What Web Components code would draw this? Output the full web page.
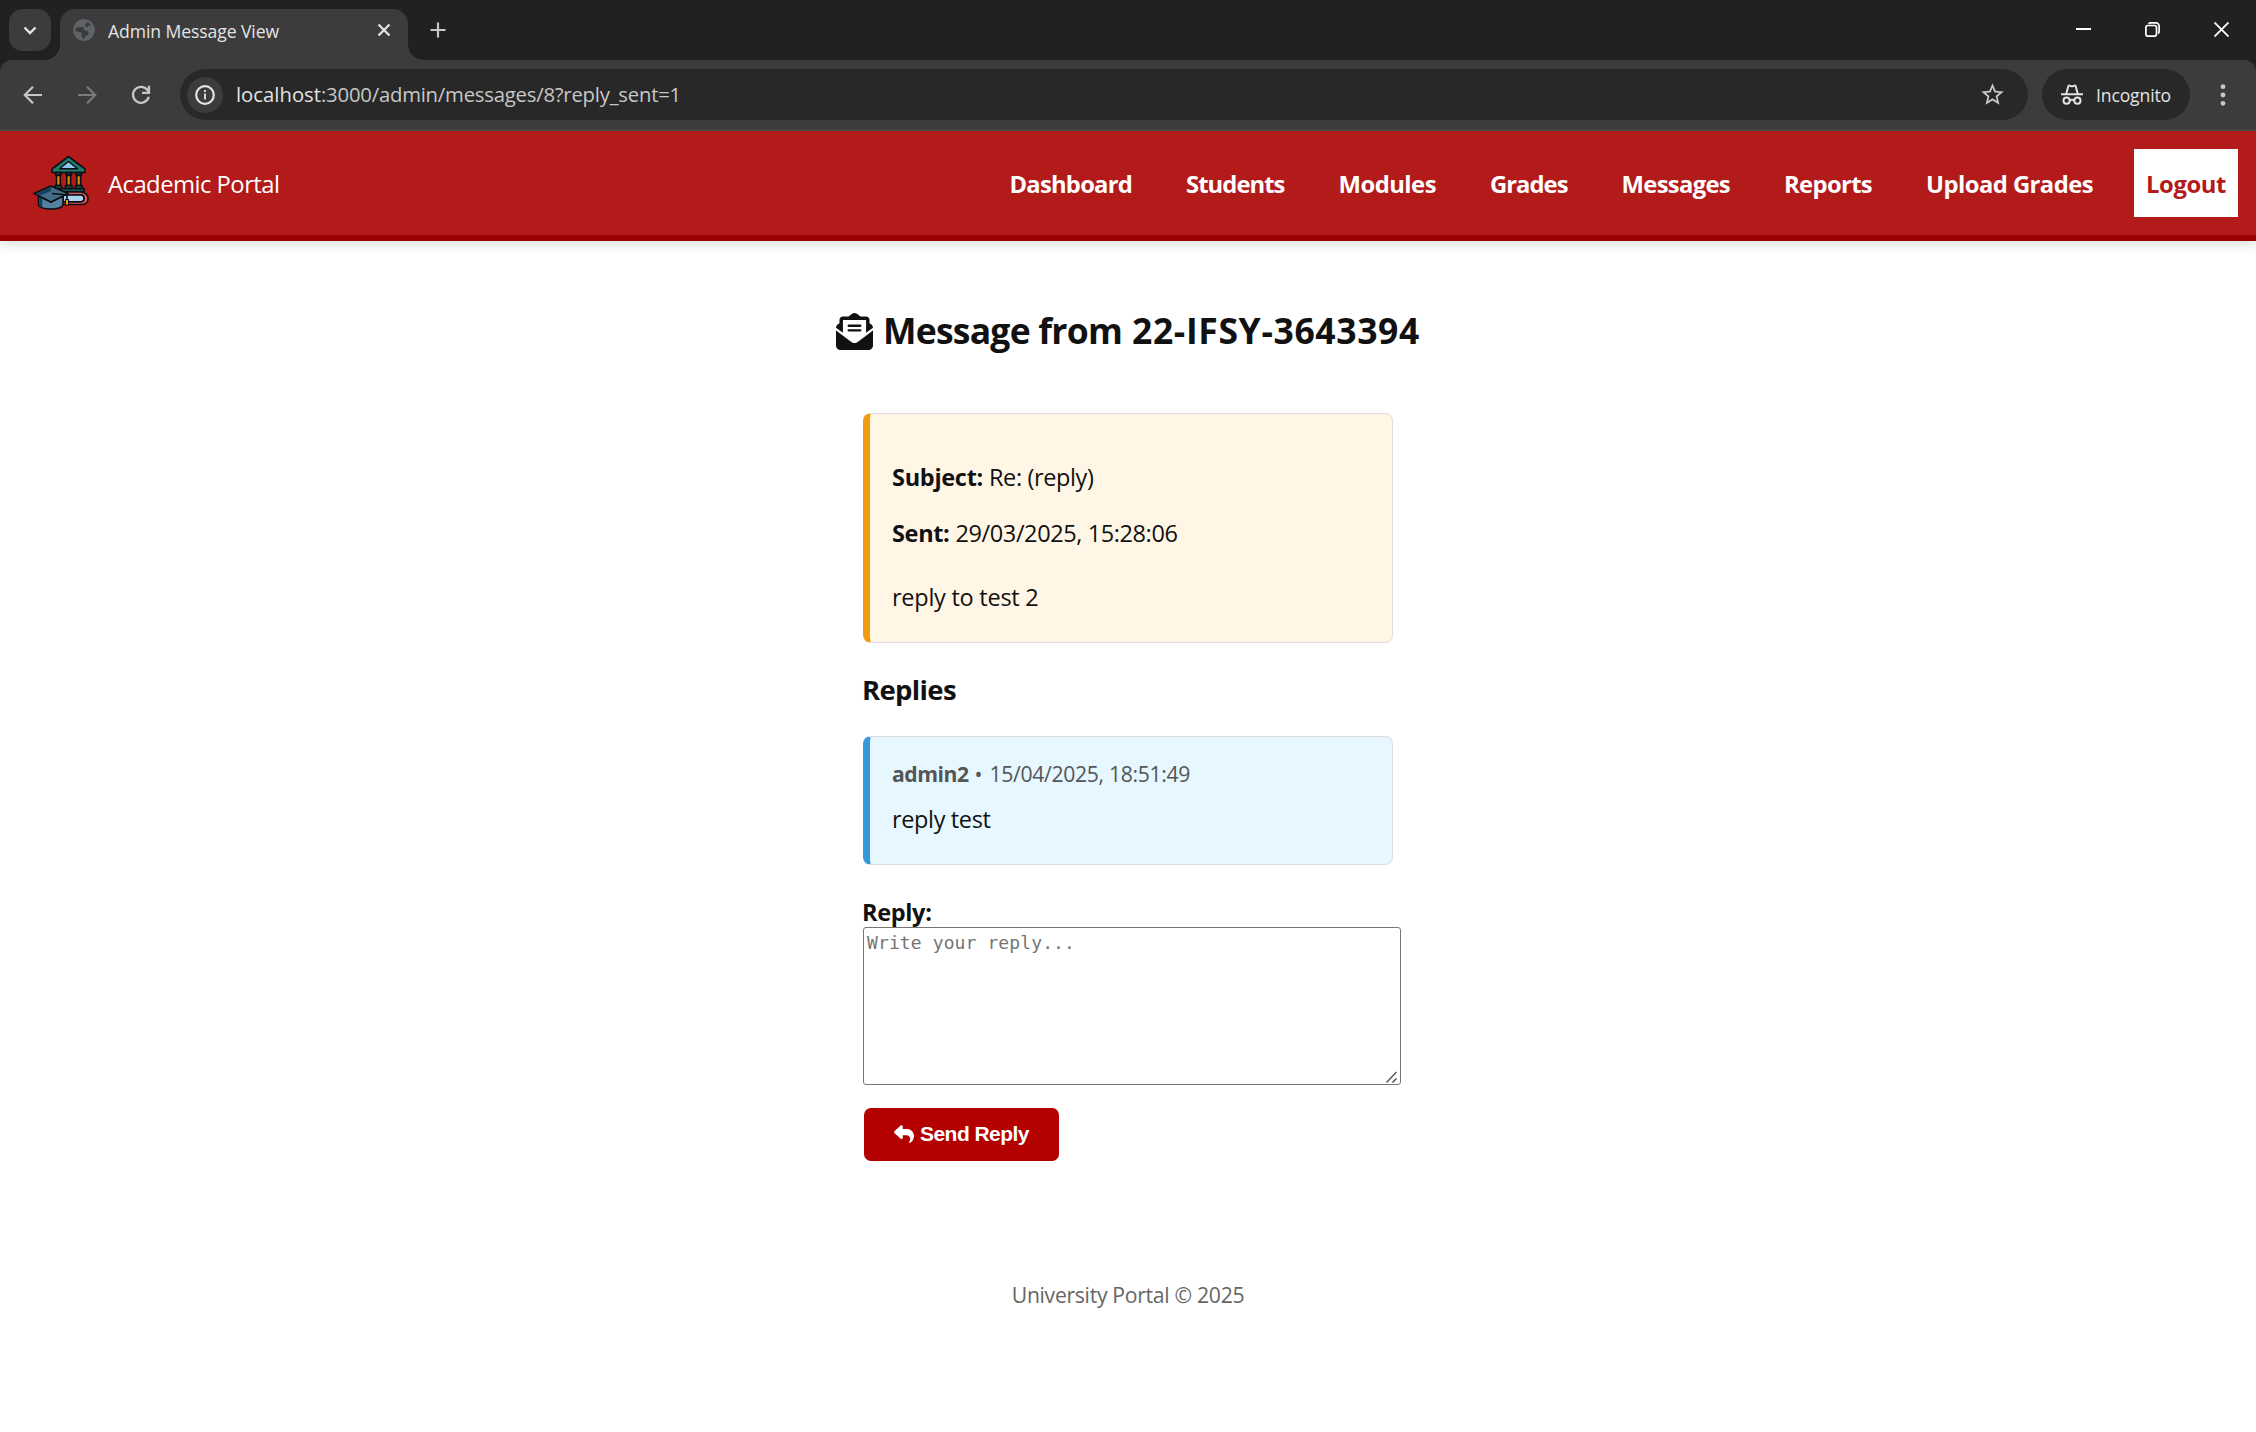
<!DOCTYPE html>
<html lang="en">
<head>
<meta charset="utf-8">
<title>Admin Message View</title>
<style>
html,body{margin:0;height:100%}
body{background:#fff;color:#111;font-family:"Open Sans","Noto Sans",sans-serif;overflow:hidden;display:flex;flex-direction:column}
</style>
</head>
<body>
<browser-chrome></browser-chrome>
<portal-header></portal-header>
<message-page></message-page>
<script>
function define(name, html, setup) {
  customElements.define(name, class extends HTMLElement {
    connectedCallback() {
      if (this.shadowRoot) return;
      this.attachShadow({ mode: "open" }).innerHTML = html;
      if (setup) setup(this, this.shadowRoot);
    }
  });
}

define("browser-chrome", `
<style>
:host{display:block;background:#202221;height:131px;color:#e3e3e3;flex:none}
svg{display:block;flex:none}
.strip{height:60px;display:flex;align-items:stretch;box-sizing:border-box}
.menu{width:42px;height:42px;border-radius:14px;background:#3c3c3c;margin:9px 9px 0 9px;display:grid;place-items:center}
.tab{position:relative;width:348px;margin-top:9px;box-sizing:border-box;border-radius:15px 15px 0 0;background:#3c3c3c;display:flex;align-items:center;padding:0 13px 9px 13px}
.tab fit-text{margin:2px auto 0 13px}
.tab::before,.tab::after{content:"";position:absolute;bottom:0;width:15px;height:15px}
.tab::before{left:-15px;background:radial-gradient(circle at 0 0,transparent 14.5px,#3c3c3c 15px)}
.tab::after{right:-15px;background:radial-gradient(circle at 100% 0,transparent 14.5px,#3c3c3c 15px)}
.plus{margin:22px auto 0 22px}
.win{display:flex;gap:54px;padding:22px 27px 0 0}
.bar{height:69px;background:#3c3c3c;border-radius:12px 12px 0 0;display:flex;align-items:center;padding:0 22px 0 22px;box-sizing:border-box;border-top:0}
.nav{display:flex;gap:32px;width:158px}
.url{width:1848px;height:51px;border-radius:26px;background:#282828;display:flex;align-items:center;box-sizing:border-box;padding:0 22px 0 7px}
.info{width:36px;height:36px;border-radius:50%;background:#3c3c3c;display:grid;place-items:center;margin-right:13px}
.u,.path{padding-bottom:2px}
.path{margin-right:auto;color:#c7c7c7}
.inc{width:148px;height:51px;border-radius:26px;background:#282828;margin-left:14px;display:flex;align-items:center;box-sizing:border-box;padding-left:19px;gap:13px}
.dots{margin-left:30px}
.line{height:2px;background:#4a4a4a}
.u{display:flex}
</style>
<div class="strip">
 <div class="menu"><svg width="14" height="9" fill="none" stroke="#e3e3e3" stroke-width="2.4"><path d="M1.5 1.5 7 7l5.500-5.500"/></svg></div>
 <div class="tab">
  <svg width="22" height="22" viewBox="0 0 22 22"><circle cx="11" cy="11" r="9.600" fill="none" stroke="#5f6368" stroke-width="2.400"/><path fill="#5f6368" d="M2 8.500 9 8c3 0 1 3.500 4 3.800 2.500.2 3 1.200 2.600 3-.5 2.200-3 1.500-3.600 3L11.500 21 19 17l2-7-1.500-4-3 .8c-1.200 2-4.500 1.200-4.500-.8 0-1.500 2-1.200 2-3L12 1 5 3.500zM2 12l6 1.500c2 .8-.5 2.500 1 4L10 20.500 4 17z"/></svg>
  <fit-text w="171" fs="17.600" lh="28">Admin Message View</fit-text>
  <svg width="22" height="14" viewBox="0 0 22 14" fill="none" stroke="#e3e3e3" stroke-width="2.300"><path d="m5.500 1.500 11 11m0-11-11 11"/></svg>
 </div>
 <svg class="plus" width="16" height="16" stroke="#c7c7c7" stroke-width="2.200"><path d="M8 .5v15M.5 8h15"/></svg>
 <div class="win">
  <svg width="15" height="15" stroke="#fff" stroke-width="2"><path d="M0 7h15"/></svg>
  <svg width="15" height="15" fill="none" stroke="#fff" stroke-width="1.700"><rect x=".9" y="3.500" width="10.600" height="10.600" rx="2"/><path d="M3.500 1.800Q4.300.9 5.500.9H11a3.100 3.100 0 0 1 3.100 3.100v5.500q0 1.200-.9 2"/></svg>
  <svg width="15" height="15" stroke="#fff" stroke-width="1.800"><path d="m.5.5 14 14m0-14-14 14"/></svg>
 </div>
</div>
<div class="bar">
 <div class="nav">
  <svg width="22" height="22" viewBox="0 0 22 22" fill="none" stroke="#c7c7c7" stroke-width="2.200"><path d="M20 11H3.500M11 2.800 2.800 11l8.200 8.200"/></svg>
  <svg width="22" height="22" viewBox="0 0 22 22" fill="none" stroke="#7b7b7b" stroke-width="2.200"><path d="M2 11h16.500M11 2.800l8.200 8.200-8.200 8.200"/></svg>
  <svg width="22" height="22" viewBox="0 0 22 22" fill="none" stroke="#c7c7c7" stroke-width="2.300"><path d="M18.800 12.800A8 8 0 1 1 17.800 6.500L19 8M19 1.800v7.100h-7"/></svg>
 </div>
 <div class="url">
  <div class="info"><svg width="20" height="20" fill="none" stroke="#e3e3e3"><circle cx="10" cy="10" r="8.800" stroke-width="2.200"/><path stroke-width="1.800" d="M10 8.500v6M10 5v2"/></svg></div>
  <span class="u"><fit-text w="85" fs="20.300" lh="28">localhost</fit-text></span>
  <span class="path"><fit-text w="360" fs="20.300" lh="28">:3000/admin/messages/8?reply_sent=1</fit-text></span>
  <svg width="27" height="27" viewBox="0 0 24 24" fill="#c7c7c7"><path d="M22 9.240l-7.190-.62L12 2 9.190 8.630 2 9.240l5.460 4.730L5.820 21 12 17.270 18.180 21l-1.630-7.030L22 9.240zM12 15.400l-3.760 2.270 1-4.280-3.320-2.880 4.380-.38L12 6.100l1.710 4.040 4.380.38-3.320 2.880 1 4.280L12 15.400z"/></svg>
 </div>
 <div class="inc">
  <svg width="22" height="22" viewBox="0 0 22 22" fill="none" stroke="#e3e3e3" stroke-width="2"><path d="M0 10.200h22M5.200 10 7.300 2.300Q7.500 1.300 8.600 1.600L11 2.400l2.400-.8q1.100-.3 1.300.7L16.800 10"/><circle cx="5.600" cy="16.700" r="3.100"/><circle cx="16.400" cy="16.700" r="3.100"/><path d="M8.500 16.500q2.500-1.400 5 0"/></svg>
  <fit-text w="75" fs="17.600" lh="28">Incognito</fit-text>
 </div>
 <svg class="dots" width="6" height="22" fill="#c7c7c7"><circle cx="3" cy="2.700" r="2.400"/><circle cx="3" cy="11" r="2.400"/><circle cx="3" cy="19.300" r="2.400"/></svg>
</div>
<div class="line"></div>`);

define("portal-logo", `
<style>:host{display:block;width:56px;height:56px}svg{display:block}</style>
<svg width="56" height="56" viewBox="0 0 56 56" stroke="#0b0f14" stroke-width="1.600" stroke-linejoin="round">
<path fill="#21796f" d="M35.500 1.500 52 14v3.500H19V14z"/><path fill="#8fc7ea" stroke-width="1.400" d="m35.500 6.500 9 7.200h-18z"/>
<path fill="#17524f" d="M22.500 17.500h5.500v2.500h-5.500zM33 17.500h5.500v2.500H33zM43 17.500h5.500v2.500H43zM21 33.500h30v3.500H21z"/>
<path fill="#e08a0b" d="M23.500 20.500h3.800v10h-3.800zM33.800 20.500h3.800v10h-3.800zM43.800 20.500h3.800v10h-3.800z"/>
<path fill="#17524f" d="M22 30.500h6.500v3H22zM32.500 30.500h6.500v3h-6.500zM42.500 30.500H49v3h-6.500z"/>
<path fill="#e25a60" d="M29 37h19q7 1 7 6.500T49 49.500H29v-2.800h18.500q3.500 0 3.500-3.300t-3.500-3.400H29z"/>
<path fill="#a9d3ee" d="M30 40h17.500q3.500 0 3.500 3.400t-3.500 3.300H30z"/>
<path fill="#56809f" d="M5.500 41v9q2 4 12.500 4t12-4v-9l-12 6z"/><path fill="#456d8a" d="m18 31 17 7.500L18 47 1 38.500z"/>
<path fill="#173f61" stroke="none" d="M3 38.500 18 32v4L7 40.500zM6.300 42l3 1.500v9l-3-2z"/>
<path fill="none" d="m19 38.500 15 1.500v5"/><path fill="#f0ab10" stroke-width="1.100" d="M32.500 44.500h3v5.500h-3z"/>
</svg>`);

define("nav-link", `
<style>:host{display:flex;align-items:center;padding-top:2px}:host([boxed]){background:#fff;color:#b31b1b;box-sizing:border-box;height:68px;padding:2px 12px 0;margin-left:-13px}</style><slot></slot>`);

define("portal-header", `
<style>
:host{display:flex;align-items:center;height:104px;flex:none;box-sizing:content-box;background:#b31b1b;border-bottom:6px solid #900;box-shadow:0 3px 12px rgba(0,0,0,.15);color:#fff;padding:0 18px 0 33px;position:relative}
portal-logo{margin-top:0;margin-right:19px}
.brand{margin-right:auto;padding-top:2px}
nav{display:flex;align-items:center;gap:54px;font-weight:700}
</style>
<portal-logo></portal-logo>
<fit-text class="brand" w="171.500" fs="23.800" lh="36">Academic Portal</fit-text>
<nav></nav>`, (el, root) => {
  const nav = root.querySelector("nav");
  const items = [["Dashboard",122.5],["Students",98.5],["Modules",97.5],["Grades",77.5],["Messages",108.5],["Reports",88],["Upload Grades",167],["Logout",80]];
  nav.innerHTML = items.map(([t, w]) => `<nav-link ${t === "Logout" ? "boxed" : ""}><fit-text w="${w}" fs="23.8" lh="36">${t}</fit-text></nav-link>`).join("");
});

define("message-card", `
<style>
:host{display:block;box-sizing:border-box;width:530px;border:1px solid #ddd;border-left:7px solid var(--accent);border-radius:8px;background:var(--fill);padding:0 22px}
</style><slot></slot>`);

define("send-button", `
<style>
:host{display:flex;width:195px;height:53px;border-radius:7px;background:#b30000;color:#fff;align-items:center;box-sizing:border-box;padding:0 0 2px 30px;gap:6px;font-family:"Liberation Sans",Arial,sans-serif;font-weight:700}
svg{display:block}
</style>
<svg width="20" height="20" viewBox="0 0 512 512" fill="#fff"><path d="M205 34.800c11.500 5.100 19 16.600 19 29.200v64H336c97.200 0 176 78.800 176 176c0 113.300-81.500 163.900-100.200 174.100c-2.500 1.400-5.300 1.900-8.100 1.900c-10.900 0-19.700-8.900-19.700-19.700c0-7.500 4.300-14.400 9.800-19.500c9.400-8.800 22.200-26.400 22.200-56.700c0-53-43-96-96-96H224v64c0 12.600-7.400 24.100-19 29.200s-25 3-34.400-5.400l-160-144C3.900 225.700 0 217.100 0 208s3.900-17.700 10.600-23.800l160-144c9.400-8.500 22.900-10.600 34.400-5.400z"/></svg>
<fit-text w="109" fs="21" lh="28">Send Reply</fit-text>`);

define("message-page", `
<style>
:host{display:flex;flex-direction:column;align-items:center;flex:1}
h1,h3,p,div{margin:0}
.title{display:flex;align-items:center;gap:10px;margin-top:63px;height:54px;font-weight:700}
.title svg{display:block}
.title fit-text{margin-top:-2px}
.col{width:530px;margin-top:55px;display:flex;flex-direction:column}
.row{display:flex;gap:6px;height:36px}
.first{--accent:#f39c12;--fill:#fff6e5;height:230px}
.second{--accent:#3498db;--fill:#e6f7ff;height:129px}
.b{font-weight:700}
.area{width:538px;height:158px;box-sizing:border-box;border:1px solid #767676;border-radius:3px;padding:2px 3px;color:#757575;font-family:"DejaVu Sans Mono","Liberation Mono",monospace;display:flex;justify-content:space-between}
.area svg{align-self:flex-end;margin:0 -1px -1px 0}
.meta{color:#555;gap:0}
footer{color:#666;margin-top:118px}
</style>
<h1 class="title">
<svg width="37" height="37" viewBox="0 0 512 512" fill="#111"><path d="M215.400 96H96V273.400L.2 202.500c1.600-18.100 10.900-34.900 25.700-45.800L48 140.300V96c0-26.500 21.500-48 48-48h76.600l49.900-36.900C232.200 3.900 243.900 0 256 0s23.800 3.900 33.500 11L339.400 48H416c26.500 0 48 21.500 48 48v44.300l22.100 16.400c14.800 10.900 24.100 27.700 25.700 45.800L416 273.400V96zM0 448V242.100L217.600 403.300c11.100 8.200 24.600 12.700 38.400 12.700s27.300-4.400 38.400-12.700L512 242.100V448c0 35.300-28.700 64-64 64H64c-35.300 0-64-28.700-64-64zM176 160H336c8.800 0 16 7.200 16 16s-7.200 16-16 16H176c-8.800 0-16-7.200-16-16s7.200-16 16-16zm0 64H336c8.800 0 16 7.200 16 16s-7.200 16-16 16H176c-8.800 0-16-7.200-16-16s7.200-16 16-16z"/></svg>
<fit-text w="239" fs="35.500" lh="54">Message from</fit-text><fit-text w="288" fs="35.500" lh="54">22-IFSY-3643394</fit-text></h1>
<div class="col">
 <message-card class="first">
  <div class="row" style="margin-top:45px"><fit-text class="b" w="91" fs="23.500" lh="36">Subject:</fit-text><fit-text w="104.500" fs="23.500" lh="36">Re: (reply)</fit-text></div>
  <div class="row" style="margin-top:20px"><fit-text class="b" w="57.500" fs="23.500" lh="36">Sent:</fit-text><fit-text w="222" fs="23.500" lh="36">29/03/2025, 15:28:06</fit-text></div>
  <div class="row" style="margin-top:28px"><fit-text w="146.500" fs="23.500" lh="36">reply to test 2</fit-text></div>
 </message-card>
 <h3 style="margin:27px 0 0 -1px"><fit-text w="94" fs="27.500" lh="40">Replies</fit-text></h3>
 <message-card class="second" style="margin-top:26px">
  <div class="row meta" style="margin-top:19px"><fit-text class="b" w="76.500" fs="21.200" lh="36">admin2</fit-text><fit-text style="margin:0 6px" w="9" fs="21.200" lh="36">•</fit-text><fit-text w="200.500" fs="21.200" lh="36">15/04/2025, 18:51:49</fit-text></div>
  <div class="row" style="margin-top:9px"><fit-text w="98.500" fs="23.500" lh="36">reply test</fit-text></div>
 </message-card>
 <div class="b" style="margin:29px 0 0 -1px;height:33px"><fit-text w="69.500" fs="23.500" lh="36">Reply:</fit-text></div>
 <div class="area"><fit-text w="208" fs="18" lh="26">Write your reply...</fit-text><svg width="12" height="12" stroke="#555" stroke-width="1.500"><path d="m.5 11.500 10-10.500M6.500 11.500l4-4"/></svg></div>
 <send-button style="margin:23px 0 0 1px"></send-button>
</div>
<footer><fit-text w="232.500" fs="21.200" lh="32">University Portal © 2025</fit-text></footer>`);

/* One line of text, tracked so that it fills the width given in "w". */
define("fit-text", `
<style>:host{display:block;white-space:nowrap;flex:none}span{display:inline-block}</style><span><slot></slot></span>`, (el, root) => {
  const w = +el.getAttribute("w");
  el.style.cssText += `;font-size:${el.getAttribute("fs")}px;line-height:${el.getAttribute("lh")}px;width:${w}px`;
  const span = root.querySelector("span");
  const n = el.textContent.trim().length;
  span.style.letterSpacing = ((w - span.getBoundingClientRect().width) / n).toFixed(3) + "px";
});
</script>
</body>
</html>
